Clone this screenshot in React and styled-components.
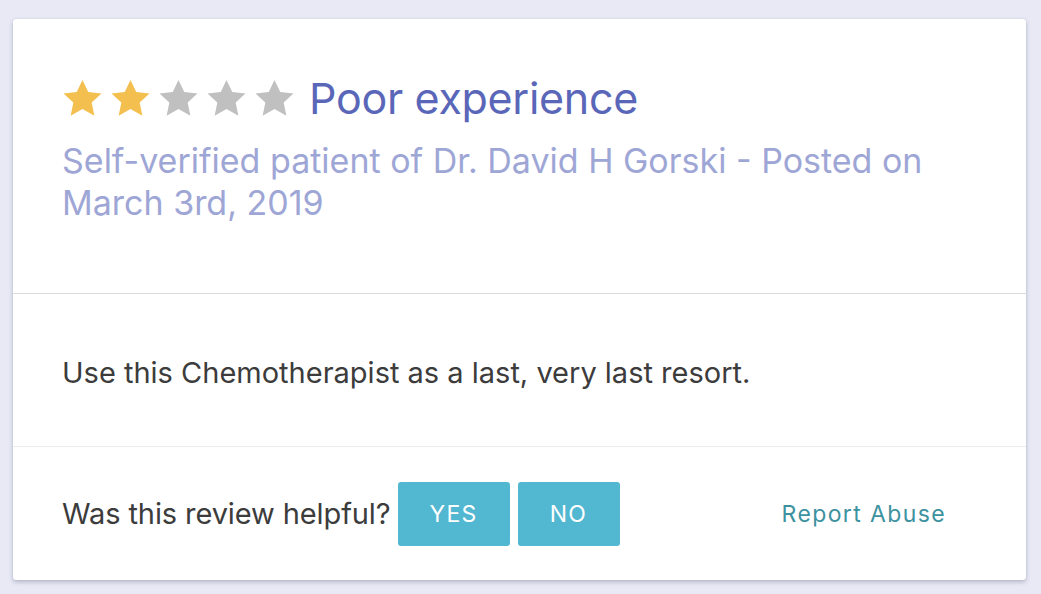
import React from "react";
import styled, { createGlobalStyle } from "styled-components";

const GlobalStyle = createGlobalStyle`
  html, body {
    margin: 0;
    padding: 0;
    background: #e8e9f5;
  }
  body {
    font-family: Inter, "Noto Sans", sans-serif;
  }
`;

const Page = styled.div`
  width: 1041px;
  height: 594px;
  padding: 19px 15px 0 13px;
  box-sizing: border-box;
`;

const Card = styled.div`
  width: 1013px;
  height: 561px;
  background: #fff;
  border-radius: 3px;
  box-shadow: 0 2px 4px rgba(60, 64, 90, 0.3), 0 0 1px rgba(60, 64, 90, 0.2);
  display: flex;
  flex-direction: column;
`;

const Header = styled.div`
  height: 275px;
  box-sizing: border-box;
  padding: 53px 49px 0;
  border-bottom: 1px solid #dcdcdc;
`;

const TitleRow = styled.div`
  display: flex;
  align-items: center;
  gap: 14px;
  height: 52px;
`;

const Stars = styled.div`
  display: flex;
  gap: 7px;
`;

const Title = styled.h2`
  margin: 0;
  font-size: 43px;
  line-height: 52px;
  font-weight: 400;
  color: #5a67b9;
  letter-spacing: -0.3px;
`;

const Meta = styled.p`
  margin: 16px 0 0;
  font-size: 34px;
  line-height: 42px;
  color: #9ea6d6;
`;

const Body = styled.div`
  height: 153px;
  box-sizing: border-box;
  padding: 4px 49px 0;
  display: flex;
  align-items: center;
  border-bottom: 1px solid #ececec;
  font-size: 29px;
  color: #3c3c3c;
`;

const Footer = styled.div`
  flex: 1;
  display: flex;
  align-items: center;
  padding: 0 49px;
  font-size: 29px;
  color: #3c3c3c;
`;

const Question = styled.span`
  margin-right: 7px;
  letter-spacing: -0.1px;
`;

const VoteButton = styled.button`
  height: 64px;
  width: ${(p) => p.w}px;
  margin-right: 8px;
  border: none;
  border-radius: 3px;
  background: #52b7d0;
  color: #fff;
  font-family: Inter, sans-serif;
  font-size: 23px;
  letter-spacing: 1.2px;
  cursor: pointer;
`;

const ReportLink = styled.a`
  margin-left: 154px;
  font-size: 23px;
  color: #3d929f;
  letter-spacing: 1.4px;
  text-decoration: none;
`;

const Star = ({ on }) => (
  <svg width="41" height="39" viewBox="0 0 24 23">
    <path
      d="M12 0.6l3.4 7.1 7.8 0.9-5.8 5.3 1.6 7.7L12 17.7l-7 3.9 1.6-7.7L0.8 8.6l7.8-0.9z"
      fill={on ? "#f3c04f" : "#c0c0c0"}
    />
  </svg>
);

export default function App() {
  const rating = 2;
  return (
    <>
      <GlobalStyle />
      <Page>
        <Card>
          <Header>
            <TitleRow>
              <Stars>
                {[1, 2, 3, 4, 5].map((n) => (
                  <Star key={n} on={n <= rating} />
                ))}
              </Stars>
              <Title>Poor experience</Title>
            </TitleRow>
            <Meta>
              Self-verified patient of Dr. David H Gorski - Posted on March
              3rd, 2019
            </Meta>
          </Header>
          <Body>Use this Chemotherapist as a last, very last resort.</Body>
          <Footer>
            <Question>Was this review helpful?</Question>
            <VoteButton w={112}>YES</VoteButton>
            <VoteButton w={102}>NO</VoteButton>
            <ReportLink href="#">Report Abuse</ReportLink>
          </Footer>
        </Card>
      </Page>
    </>
  );
}
